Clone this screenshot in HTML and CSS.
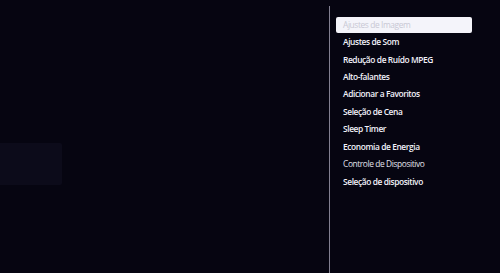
FILE: index.html
```html
<!DOCTYPE html>
<html>
<head>
    <meta charset="utf-8" />
    <title>Opções</title>
    <link rel="stylesheet" href="styles.css">
</head>
<body>
    <screen>
        <stage>
            <glare></glare>
        </stage>
        <divider></divider>
        <menu>
            <item selected>Ajustes de Imagem</item>
            <item>Ajustes de Som</item>
            <item>Redução de Ruído MPEG</item>
            <item>Alto-falantes</item>
            <item>Adicionar a Favoritos</item>
            <item>Seleção de Cena</item>
            <item>Sleep Timer</item>
            <item>Economia de Energia</item>
            <item light>Controle de Dispositivo</item>
            <item>Seleção de dispositivo</item>
        </menu>
    </screen>
</body>
</html>
```

FILE: styles.css
```css
html, body {
    --bg:      rgb(6, 5, 17);
    --line:    rgb(130, 128, 145);
    --text:    rgb(242, 242, 250);
    --box:     rgb(244, 244, 250);
    --boxtext: rgb(200, 200, 212);

    margin: 0;
    padding: 0;
    height: 100%;
    background-color: var(--bg);
    font-family: "Open Sans", Arial, sans-serif;
    overflow: hidden;
}

screen {
    display: flex;
    height: 273px;
    width: 500px;
}

stage {
    display: block;
    width: 329px;
    padding-top: 143px;
}

glare {
    display: block;
    width: 62px;
    height: 42px;
    background-color: rgb(12, 11, 26);
    border-radius: 0 2px 2px 0;
}

divider {
    display: block;
    width: 1px;
    margin-top: 6px;
    background-color: var(--line);
}

menu {
    display: flex;
    flex-direction: column;
    margin: 0;
    padding: 15.5px 0 0 6px;
    width: 136px;
}

menu item {
    display: flex;
    align-items: center;
    height: 17.44px;
    padding-left: 7px;
    color: var(--text);
    font-size: 8.4px;
    font-weight: 600;
    letter-spacing: -0.4px;
    white-space: nowrap;
}

menu item[selected] {
    height: 16px;
    margin: 1px 0 0.44px 0;
    background-color: var(--box);
    color: var(--boxtext);
    font-weight: 400;
    border-radius: 2px;
}

menu item[light] {
    font-weight: 400;
    color: rgb(225, 225, 235);
}
```
